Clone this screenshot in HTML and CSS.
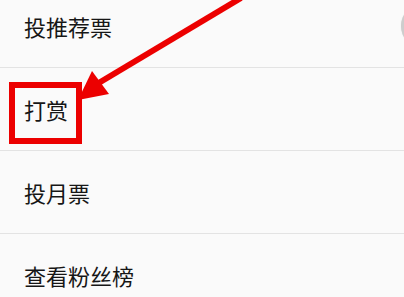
FILE: index.html
```html
<!DOCTYPE html>
<html lang="zh-CN">
<head>
<meta charset="utf-8">
<title>菜单</title>
<link rel="stylesheet" href="styles.css">
</head>
<body>
<div class="page">
  <ul class="menu">
    <li class="menu-item">投推荐票</li>
    <li class="menu-item">打赏</li>
    <li class="menu-item">投月票</li>
    <li class="menu-item">查看粉丝榜</li>
  </ul>
  <div class="edge-knob"></div>
  <div class="highlight-box"></div>
  <svg class="arrow" width="404" height="297" viewBox="0 0 404 297">
    <line x1="241" y1="-2" x2="97" y2="84" stroke="#ec0000" stroke-width="6" stroke-linecap="butt"/>
    <polygon points="78,100 92,71 109,94" fill="#ec0000"/>
  </svg>
</div>
</body>
</html>
```
FILE: styles.css
```css
html, body {
  margin: 0;
  padding: 0;
  background: #fafafa;
}
.page {
  position: relative;
  width: 404px;
  height: 297px;
  overflow: hidden;
  background: #fafafa;
  font-family: "Noto Sans CJK SC", "Noto Sans", sans-serif;
}
.menu {
  list-style: none;
  margin: -15px 0 0 0;
  padding: 0;
}
.menu-item {
  height: 82px;
  border-bottom: 1px solid #e3e3e3;
  display: flex;
  align-items: center;
  padding-left: 24px;
  font-size: 22px;
  color: #161616;
}
.edge-knob {
  position: absolute;
  left: 401px;
  top: 4px;
  width: 44px;
  height: 44px;
  border-radius: 50%;
  background: #cdcdcd;
  box-shadow: 0 0 1px #d8d8d8;
}
.highlight-box {
  position: absolute;
  left: 9px;
  top: 82px;
  width: 73px;
  height: 62px;
  box-sizing: border-box;
  border: 6px solid #ec0000;
}
.arrow {
  position: absolute;
  left: 0;
  top: 0;
}
```
